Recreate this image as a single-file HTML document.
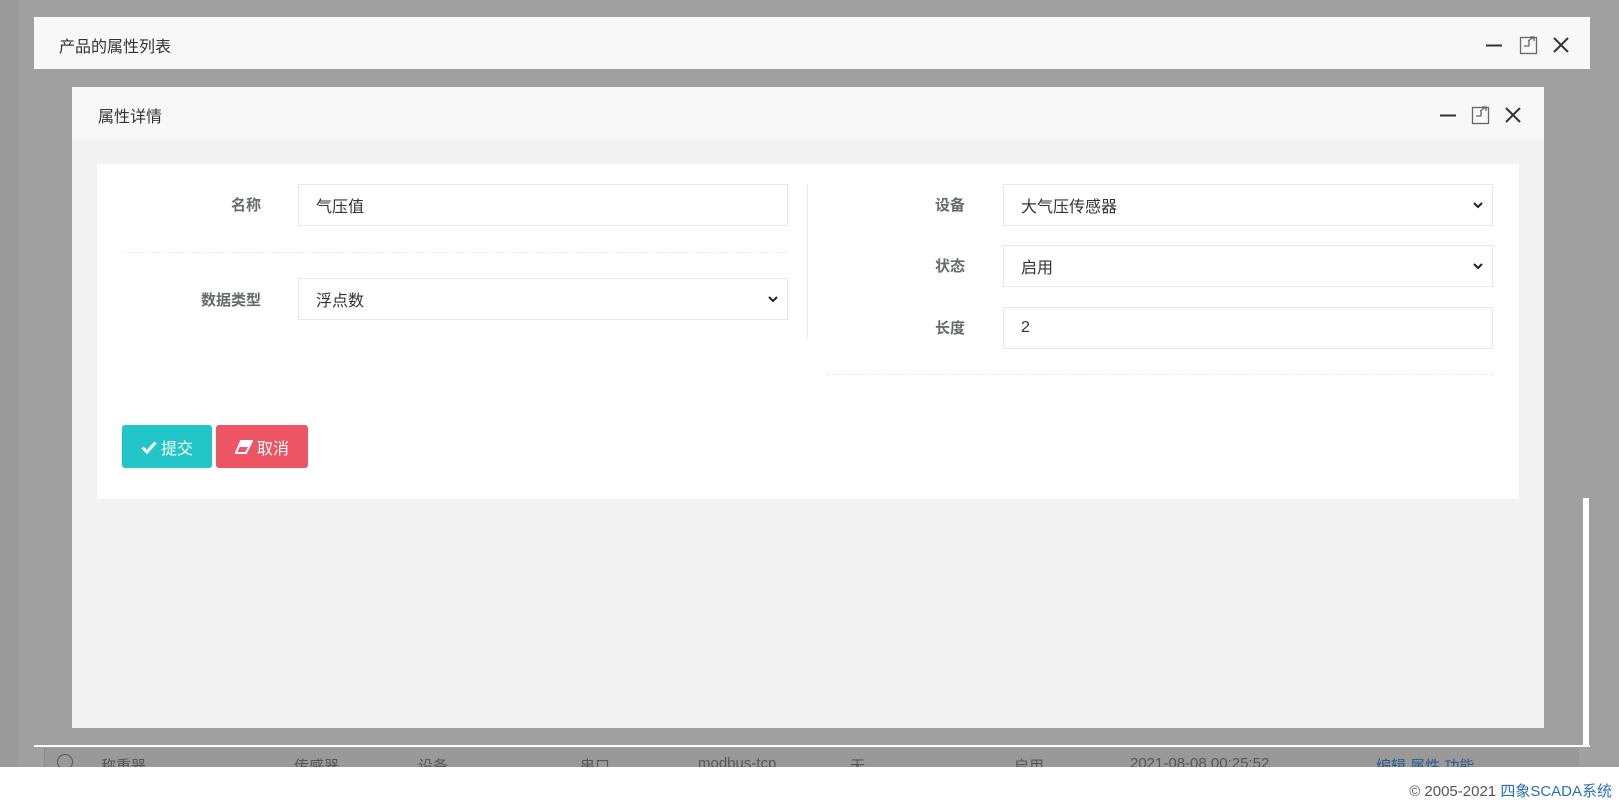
<!DOCTYPE html>
<html><head><meta charset="utf-8"><style>
*{box-sizing:border-box;margin:0;padding:0}
body{width:1619px;height:808px;position:relative;overflow:hidden;background:#fff;font-family:"Liberation Sans","Noto Sans CJK SC",sans-serif;color:#333}
.a{position:absolute}
.gray{left:0;top:0;width:1619px;height:767px;background:#a0a0a0}
.tb{background:#f8f8f8}
.ttl{font-size:16px;color:#333}
.lbl{font-size:15px;color:#676a6c;font-weight:bold;text-align:right;width:120px}
.inp{background:#fff;border:1px solid #e5e6e7;font-size:16px;color:#333;padding-left:17px;display:flex;align-items:center}
.dash{border-top:1px dashed #e7eaec;height:0}
.chev{position:absolute;right:8px;top:50%;margin-top:-5px}
.btn{color:#fff;font-size:16px;border-radius:3px;display:flex;align-items:center;justify-content:center;gap:4px}
.row{font-size:15px;color:#555;top:7px}
</style></head><body>
<div class="a gray"></div>
<div class="a" style="left:0;top:0;width:18px;height:767px;background:#9b9b9b"></div>
<!-- background table row -->
<div class="a" style="left:44px;top:748px;width:1535px;height:19px;background:#999;border-left:1px solid #888;overflow:hidden">
<div class="a" style="left:12px;top:6px;width:16px;height:16px;border:1.5px solid #555;border-radius:50%"></div>
<div class="a row" style="left:56px">称重器</div>
<div class="a row" style="left:249px">传感器</div>
<div class="a row" style="left:373px">设备</div>
<div class="a row" style="left:535px">串口</div>
<div class="a row" style="left:653px">modbus-tcp</div>
<div class="a row" style="left:805px">无</div>
<div class="a row" style="left:969px">启用</div>
<div class="a row" style="left:1085px">2021-08-08 00:25:52</div>
<div class="a row" style="left:1331px;color:#2a5a8a">编辑 属性 功能</div>
</div>
<!-- outer dialog -->
<div class="a tb" style="left:34px;top:17px;width:1556px;height:52px"></div>
<div class="a ttl" style="left:59px;top:33px">产品的属性列表</div>
<div class="a" style="left:34px;top:745px;width:1556px;height:2px;background:#fff"></div>
<div class="a" style="left:1583px;top:498px;width:6px;height:249px;background:#fff"></div>
<svg class="a" style="left:1484px;top:34px" width="100" height="22" viewBox="0 0 100 22">
<path d="M2 11.5H18" stroke="#333" stroke-width="2"/>
<rect x="36.5" y="3.5" width="16" height="16" fill="none" stroke="#666" stroke-width="1.3"/>
<path d="M40 12h5v-5M44 7l6-4M46 3h4v4" fill="none" stroke="#666" stroke-width="1.3"/>
<path d="M70 4l14 14M84 4L70 18" stroke="#333" stroke-width="2"/>
</svg>
<!-- inner dialog -->
<div class="a" style="left:72px;top:87px;width:1472px;height:641px;background:#f2f2f2"></div>
<div class="a tb" style="left:72px;top:87px;width:1472px;height:52px"></div>
<div class="a ttl" style="left:98px;top:103px">属性详情</div>
<svg class="a" style="left:1438px;top:104px" width="100" height="22" viewBox="0 0 100 22">
<path d="M2 11.5H18" stroke="#333" stroke-width="2"/>
<rect x="34.5" y="3.5" width="16" height="16" fill="none" stroke="#666" stroke-width="1.3"/>
<path d="M38 12h5v-5M42 7l6-4M44 3h4v4" fill="none" stroke="#666" stroke-width="1.3"/>
<path d="M68 4l14 14M82 4L68 18" stroke="#333" stroke-width="2"/>
</svg>
<div class="a" style="left:97px;top:164px;width:1422px;height:335px;background:#fff"></div>
<!-- left col -->
<div class="a lbl" style="left:141px;top:194px">名称</div>
<div class="a inp" style="left:298px;top:184px;width:490px;height:42px">气压值</div>
<div class="a dash" style="left:122px;top:252px;width:666px"></div>
<div class="a lbl" style="left:141px;top:289px">数据类型</div>
<div class="a inp" style="left:298px;top:278px;width:490px;height:42px">浮点数<svg class="chev" width="12" height="10" viewBox="0 0 12 10"><path d="M2 3l4 4 4-4" fill="none" stroke="#222" stroke-width="2"/></svg></div>
<div class="a" style="left:807px;top:184px;width:1px;height:155px;background:#e7eaec"></div>
<!-- right col -->
<div class="a lbl" style="left:845px;top:194px">设备</div>
<div class="a inp" style="left:1003px;top:184px;width:490px;height:42px">大气压传感器<svg class="chev" width="12" height="10" viewBox="0 0 12 10"><path d="M2 3l4 4 4-4" fill="none" stroke="#222" stroke-width="2"/></svg></div>
<div class="a lbl" style="left:845px;top:255px">状态</div>
<div class="a inp" style="left:1003px;top:245px;width:490px;height:42px">启用<svg class="chev" width="12" height="10" viewBox="0 0 12 10"><path d="M2 3l4 4 4-4" fill="none" stroke="#222" stroke-width="2"/></svg></div>
<div class="a lbl" style="left:845px;top:317px">长度</div>
<div class="a inp" style="left:1003px;top:307px;width:490px;height:42px">2</div>
<div class="a dash" style="left:827px;top:374px;width:666px"></div>
<!-- buttons -->
<div class="a btn" style="left:122px;top:425px;width:90px;height:43px;background:#23c6c8"><svg width="16" height="14" viewBox="0 0 16 14"><path d="M1.5 7.5l4.5 4.5 8.5-9.5" fill="none" stroke="#fff" stroke-width="3"/></svg>提交</div>
<div class="a btn" style="left:216px;top:425px;width:92px;height:43px;background:#ed5565"><svg width="18" height="14" viewBox="0 0 18 14"><path d="M6 1h11l-6 12H1z" fill="none" stroke="#fff" stroke-width="2"/><path d="M6 1h11l-3 6H3z" fill="#fff"/></svg>取消</div>
<!-- footer -->
<div class="a" style="right:7px;top:780px;font-size:15px;color:#555">© 2005-2021 <span style="color:#2a6fb5">四象SCADA系统</span></div>
</body></html>
